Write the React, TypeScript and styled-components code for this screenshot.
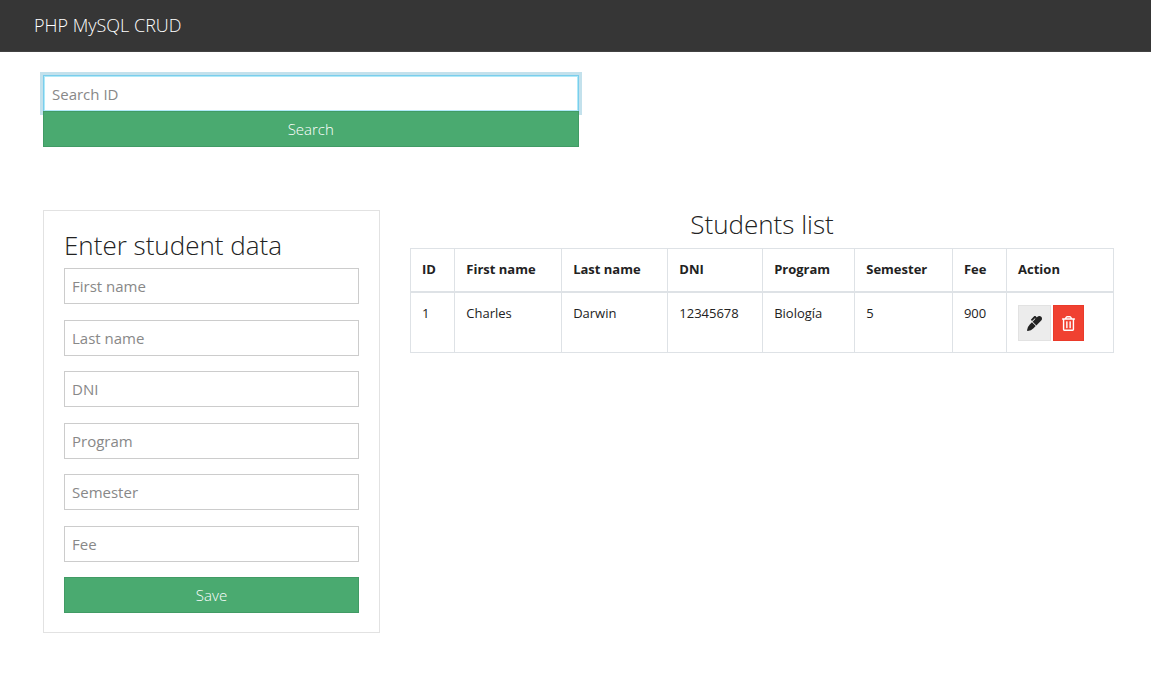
import React from "react";
import styled, { createGlobalStyle, css } from "styled-components";
import { FaMarker, FaRegTrashAlt } from "react-icons/fa";

const GlobalStyle = createGlobalStyle`
  *, *::before, *::after { box-sizing: border-box; }
  body {
    margin: 0;
    background: #fff;
    color: #222;
    font-family: "Open Sans", "Liberation Sans", sans-serif;
    font-size: 15px;
    line-height: 22px;
  }
`;

const Navbar = styled.nav`
  display: flex;
  align-items: center;
  min-height: 52px;
  padding: 0 34px 1px;
  background: #363636;
  border-bottom: 1px solid #424242;
`;

const Brand = styled.a`
  color: #fff;
  font-size: 18px;
  font-weight: 300;
  line-height: 28px;
  text-decoration: none;
`;

const Container = styled.main`
  display: flex;
  flex-direction: column;
  gap: 63px;
  padding: 23px 37px 43px 43px;
`;

const SearchForm = styled.form`
  display: flex;
  flex-direction: column;
  width: 50%;
`;

const Row = styled.div`
  display: grid;
  grid-template-columns: minmax(0, 337fr) minmax(0, 704fr);
  gap: 30px;
  align-items: start;
`;

const TextInput = styled.input<{ $highlighted?: boolean }>`
  display: block;
  width: 100%;
  height: 36px;
  padding: 0 7px;
  border: 1px solid #ccc;
  border-radius: 0;
  background: #fff;
  color: #495057;
  font: inherit;
  outline: none;

  &::placeholder {
    color: #888;
    opacity: 1;
  }

  ${({ $highlighted }) =>
    $highlighted &&
    css`
      height: 37px;
      margin-bottom: -1px;
      padding: 0 8px;
      border-color: #7bcdec;
      box-shadow: 0 0 0 3px #c3e1ec, inset 0 0 0 1px #b0eaf8;
    `}
`;

const SubmitButton = styled.button`
  display: block;
  position: relative;
  width: 100%;
  height: 36px;
  padding: 0 12px;
  border: 1px solid #419b65;
  border-radius: 0;
  background: #4aaa70;
  color: #fff;
  font: inherit;
  font-weight: 300;
  cursor: pointer;
`;

const Card = styled.section`
  padding: 20px 20px 19px;
  border: 1px solid #e2e2e2;
`;

const Title = styled.h2<{ $centered?: boolean }>`
  margin: 0;
  font-size: 26px;
  font-weight: 300;
  line-height: 28px;
  padding-bottom: ${({ $centered }) => ($centered ? 10 : 9)}px;
  text-align: ${({ $centered }) => ($centered ? "center" : "left")};
`;

const StudentForm = styled.form`
  display: flex;
  flex-direction: column;
  justify-content: space-between;
  min-height: 345px;
`;

const Table = styled.table`
  width: 100%;
  table-layout: fixed;
  border-collapse: collapse;
  font-size: 13px;
  line-height: 20px;
`;

const Column = styled.col<{ $share: number }>`
  width: ${({ $share }) => $share}%;
`;

const HeadCell = styled.th`
  padding: 10px 11px 12px;
  border: 1px solid #dee2e6;
  border-bottom-width: 2px;
  font-weight: 700;
  text-align: left;
`;

const Cell = styled.td`
  padding: 10px 11px 11px;
  border: 1px solid #dee2e6;
  text-align: left;
  vertical-align: top;
`;

const Actions = styled.div`
  display: flex;
  gap: 2px;
  padding-top: 2px;
`;

const IconButton = styled.button<{ $danger?: boolean }>`
  display: flex;
  align-items: center;
  justify-content: center;
  width: ${({ $danger }) => ($danger ? 31 : 33)}px;
  height: 36px;
  padding: 0;
  border: 1px solid ${({ $danger }) => ($danger ? "#ea3a2a" : "#e2e2e2")};
  border-radius: 0;
  background: ${({ $danger }) => ($danger ? "#f04131" : "#ececec")};
  color: ${({ $danger }) => ($danger ? "#fff" : "#222")};
  font-size: 15px;
  cursor: pointer;
`;

const fields = ["First name", "Last name", "DNI", "Program", "Semester", "Fee"];

const columns = [
  { label: "ID", share: 6.3 },
  { label: "First name", share: 15.2 },
  { label: "Last name", share: 15.1 },
  { label: "DNI", share: 13.5 },
  { label: "Program", share: 13.1 },
  { label: "Semester", share: 13.9 },
  { label: "Fee", share: 7.7 },
  { label: "Action", share: 15.2 },
];

const students = [["1", "Charles", "Darwin", "12345678", "Biología", "5", "900"]];

export default function App() {
  return (
    <>
      <GlobalStyle />
      <Navbar>
        <Brand href="#">PHP MySQL CRUD</Brand>
      </Navbar>
      <Container>
        <SearchForm onSubmit={(e) => e.preventDefault()}>
          <TextInput $highlighted type="text" placeholder="Search ID" aria-label="Search ID" />
          <SubmitButton type="submit">Search</SubmitButton>
        </SearchForm>
        <Row>
          <Card>
            <Title>Enter student data</Title>
            <StudentForm onSubmit={(e) => e.preventDefault()}>
              {fields.map((field) => (
                <TextInput key={field} type="text" placeholder={field} aria-label={field} />
              ))}
              <SubmitButton type="submit">Save</SubmitButton>
            </StudentForm>
          </Card>
          <section>
            <Title $centered>Students list</Title>
            <Table>
              <colgroup>
                {columns.map((c) => (
                  <Column key={c.label} $share={c.share} />
                ))}
              </colgroup>
              <thead>
                <tr>
                  {columns.map((c) => (
                    <HeadCell key={c.label} scope="col">{c.label}</HeadCell>
                  ))}
                </tr>
              </thead>
              <tbody>
                {students.map((row) => (
                  <tr key={row[0]}>
                    {row.map((value, i) => (
                      <Cell key={columns[i].label}>{value}</Cell>
                    ))}
                    <Cell>
                      <Actions>
                        <IconButton type="button" aria-label="Edit"><FaMarker /></IconButton>
                        <IconButton type="button" aria-label="Delete" $danger><FaRegTrashAlt /></IconButton>
                      </Actions>
                    </Cell>
                  </tr>
                ))}
              </tbody>
            </Table>
          </section>
        </Row>
      </Container>
    </>
  );
}
